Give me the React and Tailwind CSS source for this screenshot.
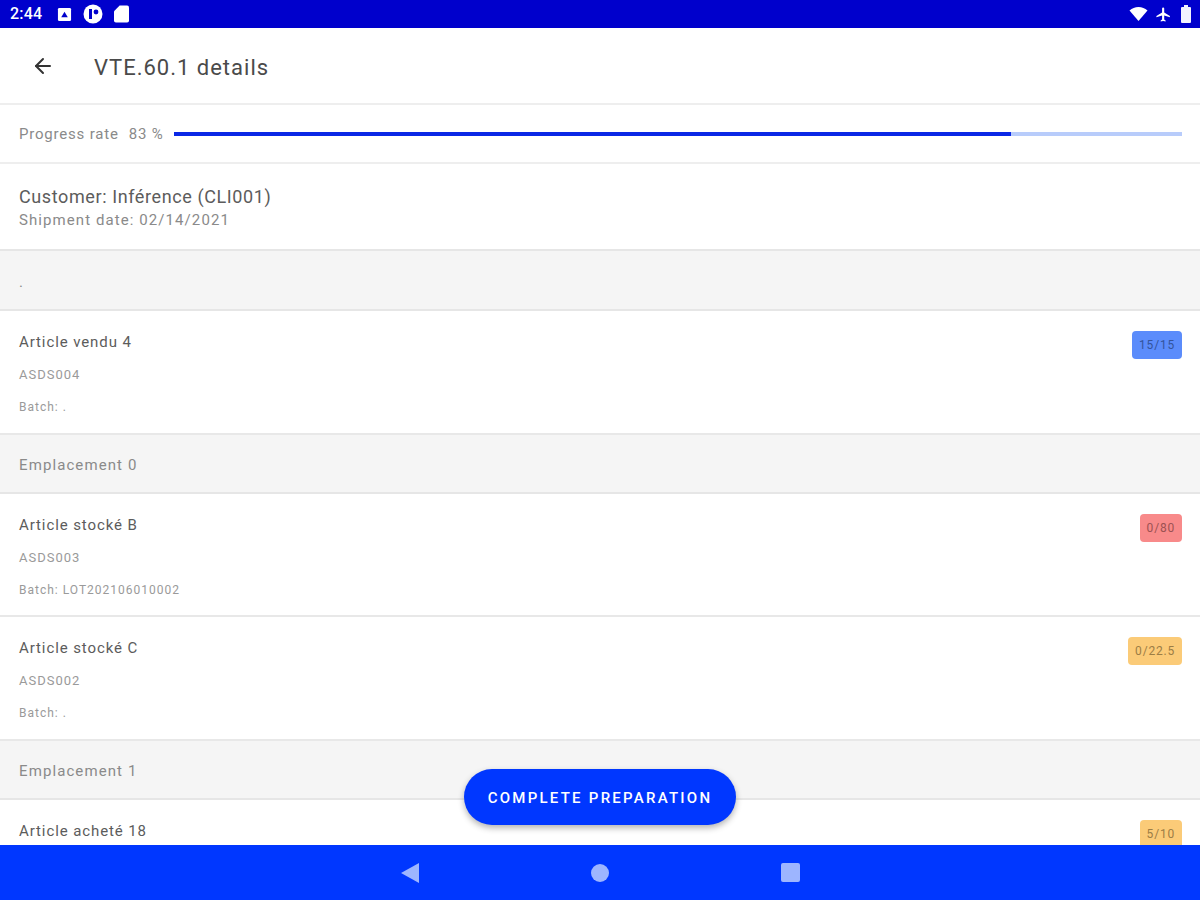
import React from 'react';
import { ArrowLeft } from 'lucide-react';

const StatusIcons = () => (
  <div className="flex items-center gap-[11px] ml-[15px]">
    <svg width="15" height="15" viewBox="0 0 16 16"><rect x="1" y="1" width="14" height="14" rx="1.500" fill="#fff" /><path d="M4.500 11 8 5l3.500 6z" fill="#0000cc" /></svg>
    <svg width="20" height="20" viewBox="0 0 20 20"><circle cx="10" cy="10" r="9.500" fill="#fff" /><rect x="6" y="5" width="3" height="10" fill="#0000cc" /><circle cx="13" cy="8" r="2.400" fill="#0000cc" /></svg>
    <svg width="15" height="18" viewBox="0 0 16 18"><path d="M6 0h8a2 2 0 0 1 2 2v14a2 2 0 0 1-2 2H2a2 2 0 0 1-2-2V6z" fill="#fff" /></svg>
  </div>
);

const StatusRight = () => (
  <div className="flex items-center gap-[7px] mr-[9px]">
    <svg width="19" height="14" viewBox="0 0 18 14"><path d="M0 3.500C2.500 1.300 5.600 0 9 0s6.500 1.300 9 3.500L9 14z" fill="#fff" /></svg>
    <svg width="17" height="17" viewBox="0 0 24 24"><path d="M21 16v-2l-8-5V3.500a1.500 1.500 0 0 0-3 0V9l-8 5v2l8-2.500V19l-2 1.500V22l3.500-1 3.500 1v-1.500L13 19v-5.500z" fill="#fff" /></svg>
    <svg width="10" height="18" viewBox="0 0 10 18" className="ml-[2px]"><path d="M3 0h4v2h2a1 1 0 0 1 1 1v14a1 1 0 0 1-1 1H1a1 1 0 0 1-1-1V3a1 1 0 0 1 1-1h2z" fill="#f2f2ff" /></svg>
  </div>
);

const Section = ({ label, h = 'h-[59px] pt-[3px]' }) => (
  <div className={`${h} shrink-0 bg-[#f5f5f5] border-b-2 border-[#e6e6e6] flex items-center px-[19px] text-[15px] tracking-[1.1px] text-[#8a8a8a]`}>
    {label}
  </div>
);

const Item = ({ name, code, batch, qty, badge, h = 'h-[123px]' }) => (
  <div className={`${h} shrink-0 bg-white border-b-2 border-[#e8e8e8] flex justify-between pl-[19px] pr-[18px] pt-[20px]`}>
    <div>
      <div className="text-[15px] leading-[22px] tracking-[0.9px] text-[#5c5c5c]">{name}</div>
      {code && <div className="mt-[11px] text-[13px] leading-[22px] tracking-[1px] text-[#9a9a9a]">{code}</div>}
      {batch && <div className="mt-[11px] text-[12px] leading-[20px] tracking-[1px] text-[#9a9a9a]">Batch: {batch}</div>}
    </div>
    <div className={`${badge} h-[28px] rounded-[4px] px-[7px] flex items-center text-[12px] tracking-[0.8px]`}>{qty}</div>
  </div>
);

const App = () => {
  return (
    <div className="relative w-[1200px] h-[900px] overflow-hidden flex flex-col bg-white font-['Roboto',sans-serif]">
      {/* Status bar */}
      <div className="h-[28px] shrink-0 bg-[#0000cc] flex items-center justify-between text-white">
        <div className="flex items-center pl-[10px]">
          <span className="text-[16px] font-medium tracking-[0.2px]">2:44</span>
          <StatusIcons />
        </div>
        <StatusRight />
      </div>

      {/* Toolbar */}
      <div className="h-[77px] shrink-0 border-b-2 border-[#eeeeee] flex items-center">
        <ArrowLeft className="w-[24px] h-[24px] ml-[31px] text-[#333333]" strokeWidth={2} />
        <h1 className="ml-[39px] pt-[4px] text-[22px] tracking-[1px] text-[#4a4a4a]">VTE.60.1 details</h1>
      </div>

      {/* Progress */}
      <div className="h-[59px] shrink-0 border-b-2 border-[#eeeeee] flex items-center pl-[19px] pr-[18px] text-[15px] tracking-[0.8px] text-[#8a8a8a]">
        <span className="pt-[2px]">Progress rate</span>
        <span className="ml-[10px] pt-[2px]">83 %</span>
        <div className="ml-[11px] flex-1 h-[4px] bg-[#b8ccfb]">
          <div className="w-[83%] h-full bg-[#0a28e6]" />
        </div>
      </div>

      {/* Customer */}
      <div className="h-[87px] shrink-0 border-b-2 border-[#e6e6e6] flex flex-col justify-center px-[19px] pt-[2px]">
        <div className="text-[18px] leading-[24px] tracking-[0.6px] text-[#5c5c5c]">Customer: Inférence (CLI001)</div>
        <div className="pt-[1px] text-[15px] leading-[20px] tracking-[1.08px] text-[#8a8a8a]">Shipment date: 02/14/2021</div>
      </div>

      {/* List */}
      <div className="flex-1 min-h-0 overflow-hidden flex flex-col">
        <Section label="." h="h-[60px] pt-[5px]" />
        <Item name="Article vendu 4" code="ASDS004" batch="." qty="15/15" badge="bg-[#5b8cfb] text-[#33549c]" h="h-[124px]" />
        <Section label="Emplacement 0" />
        <Item name="Article stocké B" code="ASDS003" batch="LOT202106010002" qty="0/80" badge="bg-[#f88a8a] text-[#9c5252]" />
        <Item name="Article stocké C" code="ASDS002" batch="." qty="0/22.5" badge="bg-[#fbcb78] text-[#9c7d45]" h="h-[124px]" />
        <Section label="Emplacement 1" />
        <Item name="Article acheté 18" qty="5/10" badge="bg-[#fbcb78] text-[#9c7d45]" />
      </div>

      {/* Nav bar */}
      <div className="h-[55px] shrink-0 bg-[#0037ff] flex items-center justify-center gap-[172px]">
        <svg width="18" height="20" viewBox="0 0 18 20"><path d="M18 0v20L0 10z" fill="#9db5ff" /></svg>
        <div className="w-[18px] h-[18px] rounded-full bg-[#9db5ff]" />
        <div className="w-[19px] h-[19px] rounded-[2px] bg-[#9db5ff]" />
      </div>

      {/* Floating button */}
      <button className="absolute left-[464px] top-[769px] w-[272px] h-[56px] pt-[2px] rounded-full bg-[#0037ff] text-white text-[15px] font-medium tracking-[2.25px] shadow-[0_3px_6px_rgba(0,0,0,0.3)]">
        COMPLETE PREPARATION
      </button>
    </div>
  );
};

export default App;
